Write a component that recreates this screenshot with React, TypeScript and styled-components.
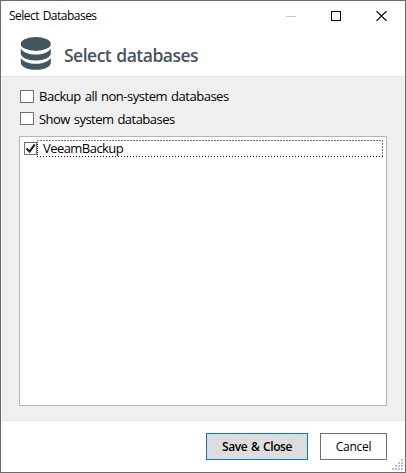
import React from "react";
import styled, { createGlobalStyle } from "styled-components";

const GlobalStyle = createGlobalStyle`
  * { box-sizing: border-box; }
  html, body { margin: 0; padding: 0; overflow: hidden; background: #fff; }
`;

const Dialog = styled.div`
  display: flex;
  flex-direction: column;
  position: relative;
  width: 406px;
  height: 473px;
  border: 1px solid #6b6b6b;
  background: #fff;
  color: #000;
  font-family: "Open Sans", "Noto Sans", sans-serif;
  font-size: 12px;
`;

const Text = styled.span<{
  $size?: number;
  $weight?: number;
  $spacing?: number;
  $color?: string;
  $lift?: number;
}>`
  margin-bottom: ${(p) => p.$lift ?? 0}px;
  font-size: ${(p) => p.$size ?? 12}px;
  font-weight: ${(p) => p.$weight ?? 400};
  letter-spacing: ${(p) => p.$spacing ?? 0}px;
  word-spacing: 1px;
  color: ${(p) => p.$color ?? "#000"};
  line-height: 16px;
  white-space: nowrap;
`;

const TitleBar = styled.div`
  display: flex;
  align-items: center;
  justify-content: space-between;
  height: 29px;
  padding: 0 18px 0 8px;
  flex: none;
`;

const WindowControls = styled.div`
  display: flex;
  gap: 35px;
  svg { display: block; }
`;

const Header = styled.header`
  display: flex;
  align-items: center;
  gap: 13px;
  height: 46px;
  padding: 3px 0 0 19px;
  flex: none;
  svg { display: block; margin-top: -3px; }
`;

const Body = styled.main`
  display: flex;
  flex-direction: column;
  height: 345px;
  padding: 13px 18px 0;
  border-top: 1px solid #e6e6e6;
  border-bottom: 1px solid #e9e9e9;
  background: #efefef;
  flex: none;
`;

const CheckRow = styled.div`
  display: flex;
  align-items: center;
  gap: 5px;
  height: 13px;
  margin: 0 0 9px 1px;
`;

const CheckBox = styled.span<{ $width?: number }>`
  display: block;
  width: ${(p) => p.$width ?? 14}px;
  height: 13px;
  border: 1px solid #707070;
  background: #fff;
  flex: none;
  svg { display: block; }
`;

const ListBox = styled.div`
  height: 270px;
  margin-top: 2px;
  padding: 3px 3px 0 4px;
  border: 1px solid #b4b5b8;
  background: #fff;
`;

const ListItem = styled.div`
  display: flex;
  align-items: center;
  height: 17px;
`;

const ItemLabel = styled.div`
  display: flex;
  align-items: center;
  flex: 1;
  height: 17px;
  padding: 0 0 2px 6px;
  background:
    repeating-linear-gradient(90deg, #777 0 2px, #fff 2px 3px) 0 0 / 100% 1px no-repeat,
    repeating-linear-gradient(90deg, #000 0 1px, #fff 1px 3px) 0 100% / 100% 1px no-repeat,
    repeating-linear-gradient(180deg, #222 0 1px, #fff 1px 2px) 0 0 / 1px 100% no-repeat,
    repeating-linear-gradient(180deg, #777 0 2px, #fff 2px 3px) 100% 0 / 1px 100% no-repeat;
`;

const Footer = styled.footer`
  display: flex;
  justify-content: flex-end;
  gap: 12px;
  padding: 12px 18px 0 0;
  flex: 1;
`;

const Button = styled.button<{ $primary?: boolean }>`
  display: flex;
  align-items: center;
  justify-content: center;
  width: ${(p) => (p.$primary ? 102 : 67)}px;
  height: 27px;
  padding: 0;
  border: 1px solid ${(p) => (p.$primary ? "#0078d7" : "#707070")};
  background: ${(p) => (p.$primary ? "#ddd" : "#fff")};
  font-family: inherit;
`;

const ResizeGrip = styled.svg`
  position: absolute;
  right: 2px;
  bottom: 2px;
`;

const gripDots = [
  [9, 0], [6, 3], [9, 3], [3, 6], [6, 6], [9, 6], [0, 9], [3, 9], [6, 9], [9, 9],
];

export default function App() {
  return (
    <>
      <GlobalStyle />
      <Dialog>
        <TitleBar>
          <Text $size={12} $spacing={-0.51}>Select Databases</Text>
          <WindowControls>
            <svg width="10" height="10" shapeRendering="crispEdges">
              <path d="M0 5.5H10" stroke="#c8c8c8" />
            </svg>
            <svg width="10" height="10" shapeRendering="crispEdges">
              <rect x=".5" y=".5" width="9" height="9" fill="none" stroke="#000" />
            </svg>
            <svg width="11" height="10">
              <path d="M.5 0L10.5 10M10.5 0L.5 10" stroke="#000" strokeWidth="1.1" />
            </svg>
          </WindowControls>
        </TitleBar>
        <Header>
          <svg width="31" height="34" viewBox="0 0 31 34" fill="#43555f">
            <ellipse cx="15.8" cy="7.9" rx="15" ry="7" />
            <path d="M.8 12.7C3.300 16.500 9.300 18.500 15.800 18.500S28.300 16.500 30.800 12.700V17.500C30.800 21.200 24.300 24.500 15.800 24.500S.8 21.200 .8 17.500Z" />
            <path d="M.8 21.900C3.300 25.700 9.300 27.700 15.800 27.700S28.300 25.700 30.800 21.900V26.700C30.800 30.600 24.300 33.800 15.800 33.800S.8 30.600 .8 26.700Z" />
          </svg>
          <Text $size={17.5} $weight={600} $spacing={-0.5} $color="#43555f">Select databases</Text>
        </Header>
        <Body>
          <CheckRow>
            <CheckBox />
            <Text $size={13} $spacing={-0.47} $lift={2}>Backup all non-system databases</Text>
          </CheckRow>
          <CheckRow>
            <CheckBox />
            <Text $size={13} $spacing={-0.52}>Show system databases</Text>
          </CheckRow>
          <ListBox>
            <ListItem>
              <CheckBox $width={13}>
                <svg width="11" height="11">
                  <path d="M1.5 5.5L4.6 8.7L9.8 1.4" fill="none" stroke="#212121" strokeWidth="2.1" />
                </svg>
              </CheckBox>
              <ItemLabel>
                <Text $size={13} $spacing={-0.55}>VeeamBackup</Text>
              </ItemLabel>
            </ListItem>
          </ListBox>
        </Body>
        <Footer>
          <Button $primary>
            <Text $size={12} $weight={600} $spacing={-0.42}>Save &amp; Close</Text>
          </Button>
          <Button>
            <Text $size={12} $spacing={-0.3}>Cancel</Text>
          </Button>
        </Footer>
        <ResizeGrip width="11" height="11" fill="#b8bfd6" shapeRendering="crispEdges">
          {gripDots.map(([x, y]) => (
            <rect key={`${x}-${y}`} x={x} y={y} width="2" height="2" />
          ))}
        </ResizeGrip>
      </Dialog>
    </>
  );
}
